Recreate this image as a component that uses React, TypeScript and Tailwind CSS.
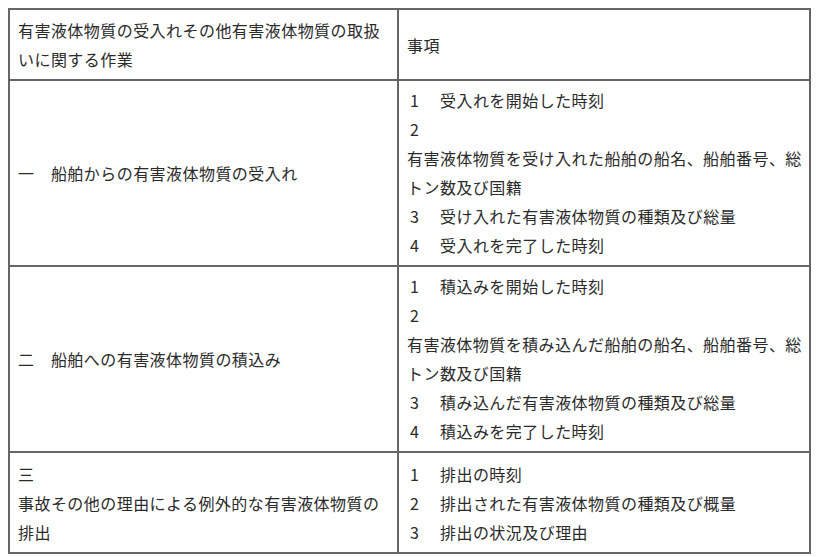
import React from "react";

const Num = ({ n }: { n: string }) => (
  <span className="inline-block w-[33px] pl-[3px]">{n}</span>
);

const cell = "border-r-2 border-b-2 border-[#666] px-[8px] py-[5px] flex flex-col justify-center";

export default function App() {
  return (
    <div
      className="min-h-[557px] w-[817px] bg-white pt-[8px] pl-[8px] text-[#2a2a2a] text-[16px] leading-[29px] tracking-[0.45px]"
      style={{ fontFamily: '"Noto Sans CJK JP", "Noto Sans", sans-serif' }}
    >
      <div className="grid w-[803px] grid-cols-[389px_412px] border-t-2 border-l-2 border-[#666] whitespace-nowrap">
        <div className={`${cell} pt-[6px]`}>
          <div>有害液体物質の受入れその他有害液体物質の取扱</div>
          <div>いに関する作業</div>
        </div>
        <div className={`${cell} pt-[6px]`}>
          <div>事項</div>
        </div>

        <div className={cell}>
          <div>一　船舶からの有害液体物質の受入れ</div>
        </div>
        <div className={cell}>
          <div><Num n="1" />受入れを開始した時刻</div>
          <div><Num n="2" /></div>
          <div>有害液体物質を受け入れた船舶の船名、船舶番号、総</div>
          <div>トン数及び国籍</div>
          <div><Num n="3" />受け入れた有害液体物質の種類及び総量</div>
          <div><Num n="4" />受入れを完了した時刻</div>
        </div>

        <div className={cell}>
          <div>二　船舶への有害液体物質の積込み</div>
        </div>
        <div className={cell}>
          <div><Num n="1" />積込みを開始した時刻</div>
          <div><Num n="2" /></div>
          <div>有害液体物質を積み込んだ船舶の船名、船舶番号、総</div>
          <div>トン数及び国籍</div>
          <div><Num n="3" />積み込んだ有害液体物質の種類及び総量</div>
          <div><Num n="4" />積込みを完了した時刻</div>
        </div>

        <div className={`${cell} pt-[7px]`}>
          <div>三</div>
          <div>事故その他の理由による例外的な有害液体物質の</div>
          <div>排出</div>
        </div>
        <div className={`${cell} pt-[7px]`}>
          <div><Num n="1" />排出の時刻</div>
          <div><Num n="2" />排出された有害液体物質の種類及び概量</div>
          <div><Num n="3" />排出の状況及び理由</div>
        </div>
      </div>
    </div>
  );
}
